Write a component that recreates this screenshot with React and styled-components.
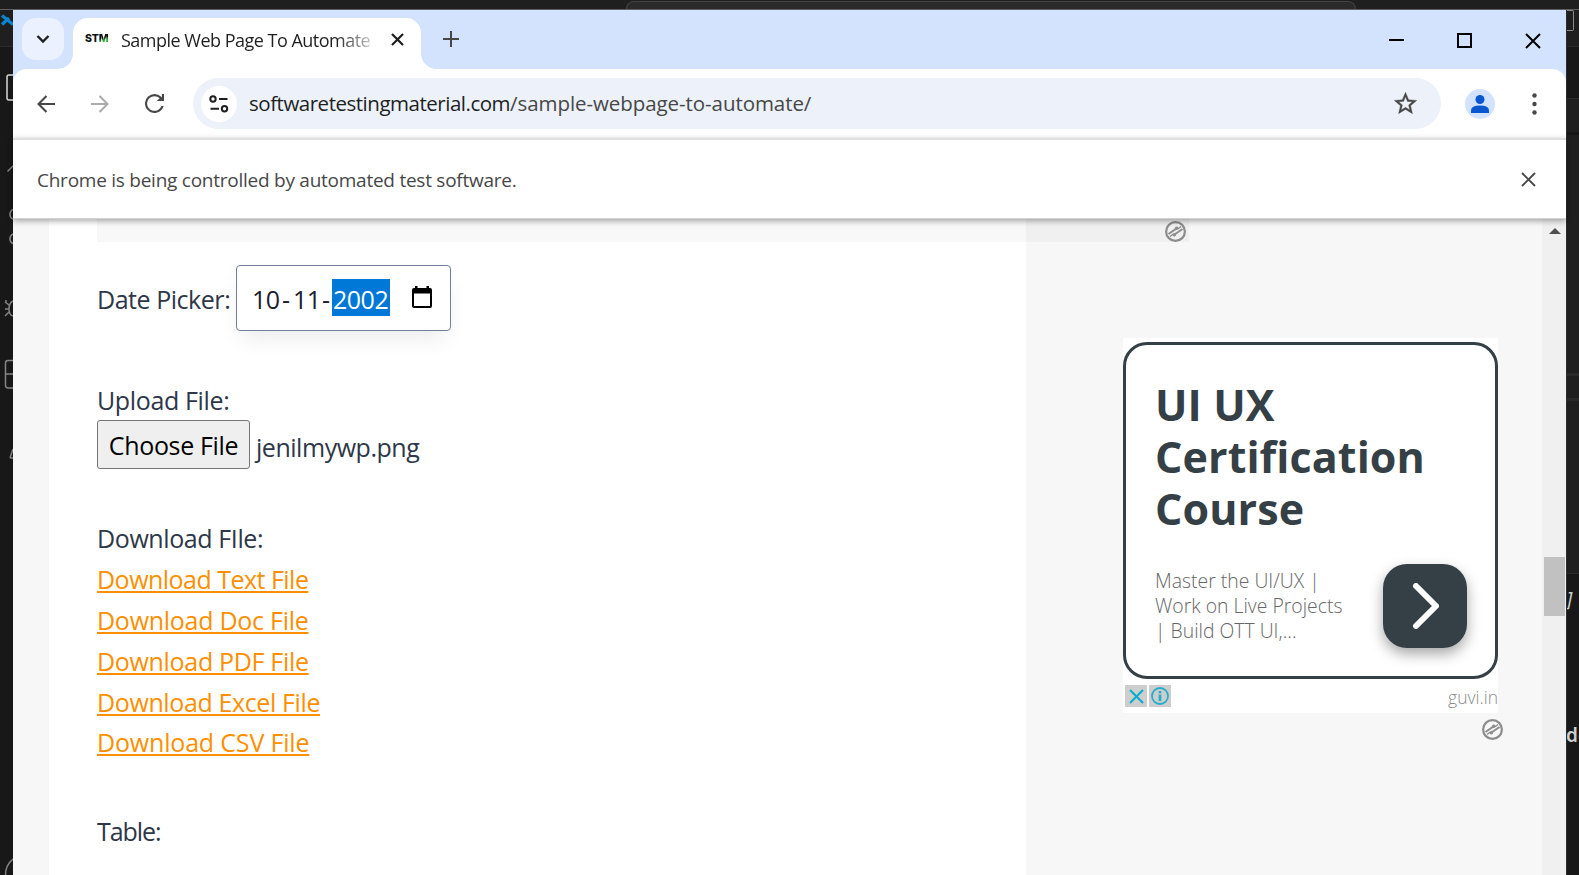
import React from "react";
import styled, { createGlobalStyle } from "styled-components";

const Global = createGlobalStyle`
  * { box-sizing: border-box; }
  body { margin: 0; overflow: hidden; background: #181818; }
  svg { display: block; flex: none; }
`;

const Desktop = styled.div`
  width: 1579px;
  height: 875px;
  overflow: hidden;
  display: grid;
  grid-template: 10px 865px / 13px 1553px 13px;
  background: #181818;
  font-family: "Open Sans", "Noto Sans", sans-serif;
`;

const EditorTitleBar = styled.div`
  grid-column: 1 / -1;
  display: flex;
  align-items: flex-end;
  padding-left: 626px;
  background: linear-gradient(#1f1f1f 0 9px, #5d5f63 9px);
`;

const CommandCenter = styled.div`
  width: 730px;
  height: 8px;
  margin-bottom: 1px;
  border: 1px solid #434343;
  border-bottom: 0;
  border-radius: 8px 8px 0 0;
  background: #2a2a2a;
`;

const ActivityBar = styled.div`
  background: linear-gradient(#1f1f1f 0 36px, #2b2b2b 36px 37px, #181818 37px);
`;

const EditorEdge = styled.div`
  display: flex;
  flex-direction: column;
  overflow: hidden;
  border-left: 1px solid #2c2c2c;
  background: linear-gradient(
    #1f1f1f 0 36px, #2b2b2b 36px 37px, #181818 37px 88px, #2b2b2b 88px 89px,
    #1f1f1f 89px 122px, #161616 122px 125px, #1f1f1f 125px 363px,
    #2a2a2a 363px 366px, #1f1f1f 366px 388px, #2a2a2a 388px 391px,
    #1f1f1f 391px 563px, #2b2b2b 563px 564px, #181818 564px
  );
`;

const LayoutToggle = styled.div`
  width: 7px;
  height: 21px;
  border: 1px solid #8b8b8b;
  border-left: 0;
  border-radius: 0 2px 2px 0;
`;

const Code = styled.span`
  margin-top: ${(p) => p.$gap}px;
  margin-left: ${(p) => p.$shift || 0}px;
  height: 26px;
  line-height: 26px;
  white-space: nowrap;
  font-family: "Noto Sans", sans-serif;
  font-size: ${(p) => p.$size}px;
  font-style: ${(p) => (p.$italic ? "italic" : "normal")};
  font-weight: ${(p) => (p.$italic ? 400 : 600)};
  color: #cfcfcf;
`;

const Browser = styled.div`
  display: flex;
  flex-direction: column;
  background: #d3e3fd;
`;

const TabStrip = styled.div`
  display: flex;
  height: 59px;
  padding: 8px 25px 0 9px;
`;

const TabSearch = styled.div`
  display: grid;
  place-items: center;
  width: 42px;
  height: 42px;
  border-radius: 14px;
  background: #ebf1fe;
`;

const Tab = styled.div`
  position: relative;
  display: flex;
  align-items: center;
  width: 348px;
  height: 51px;
  margin-left: 9px;
  padding: 0 17px 9px 12px;
  border-radius: 15px 15px 0 0;
  background: #fff;

  &::before,
  &::after {
    content: "";
    position: absolute;
    bottom: 0;
    width: 15px;
    height: 15px;
  }
  &::before {
    right: 100%;
    background: radial-gradient(circle at 0 0, transparent 14.5px, #fff 15px);
  }
  &::after {
    left: 100%;
    background: radial-gradient(circle at 100% 0, transparent 14.5px, #fff 15px);
  }
`;

const Favicon = styled.span`
  width: 24px;
  font: 800 10.5px/12px Inter, sans-serif;
  letter-spacing: -0.1px;
  white-space: nowrap;
  color: #111;
`;

const FaviconAccent = styled.span`
  color: transparent;
  background: linear-gradient(160deg, #111 45%, #2fae36 60%);
  background-clip: text;
`;

const TabTitle = styled.span`
  width: 250px;
  margin: 2px 20px 0 12px;
  overflow: hidden;
  white-space: nowrap;
  font-size: 18px;
  line-height: 26px;
  letter-spacing: -0.51px;
  color: transparent;
  background: linear-gradient(90deg, #1f1f1f 215px, rgba(31, 31, 31, 0.25) 250px);
  background-clip: text;
`;

const NewTab = styled.div`
  margin: 13px 0 0 22px;
`;

const WindowControls = styled.div`
  display: flex;
  gap: 53px;
  margin: 15px 0 0 auto;
  height: 16px;
`;

const Toolbar = styled.div`
  display: flex;
  align-items: center;
  height: 69px;
  padding: 0 29px 0 24px;
  border-radius: 14px 14px 0 0;
  background: #fff;
`;

const NavButtons = styled.div`
  display: flex;
  align-items: center;
  gap: 36px;
  width: 156px;
`;

const Omnibox = styled.div`
  display: flex;
  align-items: center;
  width: 1248px;
  height: 51px;
  padding: 0 22px 0 8px;
  border-radius: 26px;
  background: #ecf1fa;
`;

const SiteInfo = styled.div`
  display: grid;
  place-items: center;
  width: 36px;
  height: 36px;
  margin-right: 12px;
  border-radius: 50%;
  background: #fff;
`;

const Url = styled.span`
  flex: 1;
  margin-bottom: 2px;
  white-space: nowrap;
  font-size: 20.5px;
  line-height: 30px;
  letter-spacing: -0.07px;
  color: #474747;
`;

const Domain = styled.span`
  letter-spacing: -0.48px;
  color: #1f1f1f;
`;

const Avatar = styled.div`
  display: grid;
  place-items: center;
  width: 30px;
  height: 30px;
  margin: 1px auto 0 24px;
  border-radius: 50%;
  background: #d3e3fd;
`;

const InfoBar = styled.div`
  position: relative;
  display: flex;
  align-items: center;
  justify-content: space-between;
  height: 81px;
  padding: 0 30px 0 24px;
  border-top: 2px solid #dfdfdf;
  border-bottom: 1px solid #d2d2d2;
  background: #fff;
  box-shadow: 0 2px 6px rgba(0, 0, 0, 0.35);
`;

const InfoText = styled.span`
  margin-top: 2px;
  font-size: 19px;
  line-height: 28px;
  letter-spacing: -0.25px;
  color: #474747;
`;

const InfoClose = styled.div`
  margin-top: 1px;
`;

const Page = styled.div`
  display: flex;
  height: 656px;
  padding-left: 36px;
  background: #f7f7f7;
  color: #2d3748;
  font-size: 25px;
`;

const Article = styled.main`
  width: 977px;
  padding-left: 48px;
  background: #fff;
`;

const AdSlot = styled.div`
  display: flex;
  justify-content: flex-end;
  height: 23px;
  width: ${(p) => p.$width}px;
  padding: 2px 3px 0 0;
  background: ${(p) => p.$tone};
`;

const Field = styled.div`
  display: flex;
  align-items: center;
  margin-top: ${(p) => p.$gap}px;
`;

const Label = styled.div`
  margin-top: ${(p) => p.$gap || 0}px;
  line-height: ${(p) => p.$line || 41}px;
  white-space: nowrap;
  letter-spacing: ${(p) => p.$track}px;
`;

const DateLabel = styled(Label)`
  width: 139px;
  padding-top: 2px;
`;

const DateInput = styled.div`
  display: flex;
  align-items: center;
  width: 215px;
  height: 66px;
  padding: 0 18px 0 14px;
  border: 1px solid #718096;
  border-radius: 4px;
  background: #fff;
  color: #1a202c;
  box-shadow: 0 12px 24px -6px rgba(0, 0, 0, 0.09);
`;

const DatePart = styled.span`
  width: ${(p) => p.$width}px;
  height: 37px;
  margin-bottom: 2px;
  padding-left: 1px;
  line-height: 40px;
  letter-spacing: -0.5px;
  white-space: nowrap;
  color: ${(p) => (p.$selected ? "#fff" : "inherit")};
  background: ${(p) => (p.$selected ? "#0078d7" : "transparent")};
`;

const CalendarSlot = styled.div`
  margin: -2px 0 0 auto;
`;

const ChooseFile = styled.button`
  width: 153px;
  height: 49px;
  margin: 0 6px 0 0;
  padding: 1px 0 0;
  border: 1px solid #767676;
  border-radius: 3px;
  background: #efefef;
  font: 400 25px/40px "Open Sans", sans-serif;
  letter-spacing: -0.35px;
  color: #000;
`;

const FileName = styled.span`
  padding-top: 4px;
  line-height: 40px;
  letter-spacing: -0.47px;
`;

const Links = styled.div`
  display: flex;
  flex-direction: column;
  align-items: flex-start;
  height: 204px;
`;

const FileLink = styled.a`
  line-height: 41px;
  white-space: nowrap;
  letter-spacing: ${(p) => p.$track}px;
  color: #ff8f00;
  text-decoration: underline;
  text-decoration-thickness: 2px;
  text-underline-offset: 2px;
  text-decoration-skip-ink: none;

  &:last-child { margin-top: -1px; }
`;

const Sidebar = styled.aside`
  width: 516px;
`;

const Ad = styled.div`
  width: 375px;
  height: 375px;
  margin: 96px 0 0 97px;
  padding-top: 4px;
  background: #fff;
`;

const AdCard = styled.div`
  height: 337px;
  padding: 34px 28px 0 29px;
  border: 3px solid #343f46;
  border-radius: 24px;
`;

const AdTitle = styled.div`
  font-size: 43px;
  font-weight: 700;
  line-height: 52px;
  letter-spacing: 0.1px;
  color: #343f46;
`;

const AdBody = styled.div`
  display: flex;
  justify-content: space-between;
  margin-top: 29px;
`;

const AdText = styled.div`
  padding-top: 4px;
  font-size: 19.4px;
  font-weight: 300;
  line-height: 25px;
  white-space: nowrap;
  color: #666;
`;

const AdButton = styled.div`
  display: grid;
  place-items: center;
  width: 84px;
  height: 84px;
  border-radius: 24px;
  background: #343f46;
  box-shadow: 0 6px 14px rgba(0, 0, 0, 0.35);
`;

const AdFooter = styled.div`
  display: flex;
  align-items: center;
  gap: 2px;
  padding: 6px 0 0 2px;
`;

const AdChoice = styled.div`
  display: grid;
  place-items: center;
  width: 22px;
  height: 22px;
  background: #cecece;
`;

const Advertiser = styled.span`
  margin-left: auto;
  padding-top: 1px;
  font-size: 17.5px;
  font-weight: 300;
  line-height: 22px;
  height: 22px;
  color: #8c8c8c;
`;

const AdBadge = styled.div`
  margin: 6px 0 0 456px;
`;

const Scrollbar = styled.div`
  width: 24px;
  padding: 9px 1px 0 2px;
  background: #f0f0f0;
`;

const ScrollThumb = styled.div`
  height: 59px;
  margin-top: 323px;
  background: #c1c1c1;
`;

const ScrollArrow = styled.div`
  width: 0;
  margin-left: 5px;
  border: 6px solid transparent;
  border-top: 0;
  border-bottom: 6px solid #505050;
`;

const Cross = ({ size, width, color }) => (
  <svg width={size} height={size} viewBox={`0 0 ${size} ${size}`} stroke={color} strokeWidth={width}>
    <path d={`M1 1L${size - 1} ${size - 1}M${size - 1} 1L1 ${size - 1}`} />
  </svg>
);

const EzoicIcon = () => (
  <svg width="21" height="21" viewBox="0 0 21 21" fill="none" stroke="#8d8d8d">
    <circle cx="10.5" cy="10.5" r="9.4" strokeWidth="2.2" />
    <path d="M3.500 13L11.500 7.500M17.500 8L9.500 13.500" strokeWidth="2" />
    <path d="M5 15.500L8 13.300M13 7.700L16 5.500" strokeWidth="1.400" />
    <circle cx="11.700" cy="7.300" r="1.800" fill="#8d8d8d" stroke="none" />
    <circle cx="9.300" cy="13.700" r="1.800" fill="#8d8d8d" stroke="none" />
  </svg>
);

const links = [
  ["Download Text File", -0.52],
  ["Download Doc File", -0.27],
  ["Download PDF File", -0.32],
  ["Download Excel File", -0.38],
  ["Download CSV File", -0.18],
];

export default function App() {
  return (
    <>
      <Global />
      <Desktop>
        <EditorTitleBar>
          <CommandCenter />
        </EditorTitleBar>

        <ActivityBar>
          <svg width="13" height="865" viewBox="0 10 13 865" fill="none" stroke="#858585" strokeWidth="1.5">
            <path d="M2 15.5L13 24.5M2 24.5L9 18" stroke="#0a84cf" strokeWidth="3.2" />
            <path d="M13 75H9Q7 75 7 77V98Q7 100 9 100H13" stroke="#d7d7d7" />
            <path d="M7.5 171.5L13 166M13 209.5Q10 211 10 214.5T13 219M13 234Q10 235.500 10 239T13 243.500" />
            <path d="M5 302L9 305M5 309H9M5 316L9 312M6 303V300M13 301Q9 303 9 309T13 316" />
            <path d="M13 360.500H8Q5.500 360.500 5.500 363V385Q5.500 388 8 388H13M6 374H13" />
            <path d="M10 458L13 449M10 458H13M13 859Q5.500 865 5.500 875" />
          </svg>
        </ActivityBar>

        <Browser>
          <TabStrip>
            <TabSearch>
              <svg width="14" height="10" viewBox="0 0 14 10" fill="none" stroke="#1f1f1f" strokeWidth="2.4">
                <path d="M1.500 2L7 7.500L12.500 2" />
              </svg>
            </TabSearch>
            <Tab>
              <Favicon>
                ST<FaviconAccent>M</FaviconAccent>
              </Favicon>
              <TabTitle>Sample Web Page To Automate</TabTitle>
              <Cross size={13} width={2.2} color="#1f1f1f" />
            </Tab>
            <NewTab>
              <svg width="16" height="16" viewBox="0 0 16 16" stroke="#474747" strokeWidth="2">
                <path d="M8 0V16M0 8H16" />
              </svg>
            </NewTab>
            <WindowControls>
              <svg width="15" height="16" viewBox="0 0 15 16"><path d="M0 6H15V8H0Z" /></svg>
              <svg width="15" height="15" viewBox="0 0 15 15" fill="none" stroke="#000" strokeWidth="2">
                <rect x="1" y="1" width="13" height="13" />
              </svg>
              <Cross size={16} width={2} color="#000" />
            </WindowControls>
          </TabStrip>

          <Toolbar>
            <NavButtons>
              <svg width="18" height="18" viewBox="0 0 18 18" fill="none" stroke="#474747" strokeWidth="2.1">
                <path d="M18 9H1.700M9.500 1L1.500 9L9.500 17" />
              </svg>
              <svg width="18" height="18" viewBox="0 0 18 18" fill="none" stroke="#ababab" strokeWidth="2.1">
                <path d="M0 9H16.300M8.500 1L16.500 9L8.500 17" />
              </svg>
              <svg width="19" height="19" viewBox="4 4 16 16" fill="#474747">
                <path d="M17.650 6.350A7.960 7.960 0 0 0 12 4a8 8 0 1 0 7.730 10h-1.900A6.200 6.200 0 1 1 12 5.800c1.700 0 3.200.7 4.350 1.850L13.800 9.800H20V4h-1.800v2.900z" />
              </svg>
            </NavButtons>
            <Omnibox>
              <SiteInfo>
                <svg width="20" height="18" viewBox="0 0 20 18" fill="none" stroke="#1f1f1f" strokeWidth="2">
                  <circle cx="4" cy="4" r="2.700" />
                  <circle cx="15.500" cy="13.800" r="2.700" />
                  <path d="M10 4H18.500M1.500 13.800H10" />
                </svg>
              </SiteInfo>
              <Url>
                <Domain>softwaretestingmaterial.com</Domain>/sample-webpage-to-automate/
              </Url>
              <svg width="27" height="27" viewBox="0 0 24 24" fill="#474747" stroke="#474747" strokeWidth="0.3">
                <path d="M22 9.240l-7.190-.62L12 2 9.190 8.630 2 9.240l5.460 4.730L5.820 21 12 17.270 18.180 21l-1.630-7.030L22 9.240zM12 15.400l-3.760 2.270 1-4.280-3.320-2.880 4.380-.38L12 6.100l1.710 4.040 4.380.38-3.320 2.880 1 4.280L12 15.400z" />
              </svg>
            </Omnibox>
            <Avatar>
              <svg width="18" height="18" viewBox="0 0 18 18" fill="#0b57d0">
                <circle cx="9" cy="4.500" r="4.500" />
                <path d="M0 18V15.500Q0 10.500 9 10.500T18 15.500V18Z" />
              </svg>
            </Avatar>
            <svg width="5" height="22" viewBox="0 0 5 22" fill="#474747">
              <circle cx="2.500" cy="2.500" r="2.200" />
              <circle cx="2.500" cy="11" r="2.200" />
              <circle cx="2.500" cy="19.500" r="2.200" />
            </svg>
          </Toolbar>

          <InfoBar>
            <InfoText>Chrome is being controlled by automated test software.</InfoText>
            <InfoClose>
              <Cross size={15} width={1.9} color="#474747" />
            </InfoClose>
          </InfoBar>

          <Page>
            <Article>
              <AdSlot $width={929} $tone="#f8f8f8" />
              <Field $gap={23}>
                <DateLabel $track={-0.46}>Date Picker:</DateLabel>
                <DateInput>
                  <DatePart $width={30}>10</DatePart>
                  <DatePart $width={11}>-</DatePart>
                  <DatePart $width={29}>11</DatePart>
                  <DatePart $width={11}>-</DatePart>
                  <DatePart $width={58} $selected>2002</DatePart>
                  <CalendarSlot>
                    <svg width="20" height="22" viewBox="0 0 20 22">
                      <path d="M3 0h2.500v2h9V0H17v2h1a2 2 0 0 1 2 2v16a2 2 0 0 1-2 2H2a2 2 0 0 1-2-2V4a2 2 0 0 1 2-2h1zM2 7.500V20h16V7.500z" />
                    </svg>
                  </CalendarSlot>
                </DateInput>
              </Field>

              <Label $gap={49} $line={40} $track={-0.36}>Upload File:</Label>
              <Field $gap={0}>
                <ChooseFile>Choose File</ChooseFile>
                <FileName>jenilmywp.png</FileName>
              </Field>

              <Label $gap={49} $track={-0.4}>Download FIle:</Label>
              <Links>
                {links.map(([text, track]) => (
                  <FileLink key={text} $track={track}>{text}</FileLink>
                ))}
              </Links>

              <Label $gap={48} $track={-1.05}>Table:</Label>
            </Article>

            <Sidebar>
              <AdSlot $width={163} $tone="#f0f0f0"><EzoicIcon /></AdSlot>
              <Ad>
                <AdCard>
                  <AdTitle>UI UX<br />Certification<br />Course</AdTitle>
                  <AdBody>
                    <AdText>Master the UI/UX |<br />Work on Live Projects<br />| Build OTT UI,...</AdText>
                    <AdButton>
                      <svg width="28" height="46" viewBox="0 0 28 46" fill="none" stroke="#fff" strokeWidth="6" strokeLinecap="round" strokeLinejoin="round">
                        <path d="M5 3L25 23L5 43" />
                      </svg>
                    </AdButton>
                  </AdBody>
                </AdCard>
                <AdFooter>
                  <AdChoice><Cross size={15} width={2} color="#00aecd" /></AdChoice>
                  <AdChoice>
                    <svg width="18" height="18" viewBox="0 0 18 18" fill="none" stroke="#26aecb">
                      <circle cx="9" cy="9" r="8" strokeWidth="1.800" />
                      <path d="M9 4V6.200M9 7.500V14" strokeWidth="2.800" />
                    </svg>
                  </AdChoice>
                  <Advertiser>guvi.in</Advertiser>
                </AdFooter>
              </Ad>
              <AdBadge><EzoicIcon /></AdBadge>
            </Sidebar>

            <Scrollbar>
              <ScrollArrow />
              <ScrollThumb />
            </Scrollbar>
          </Page>
        </Browser>

        <EditorEdge>
          <LayoutToggle />
          <Code $gap={555} $size={19} $shift={-5} $italic>.]</Code>
          <Code $gap={110} $size={19} $shift={-1}>de</Code>
        </EditorEdge>
      </Desktop>
    </>
  );
}
